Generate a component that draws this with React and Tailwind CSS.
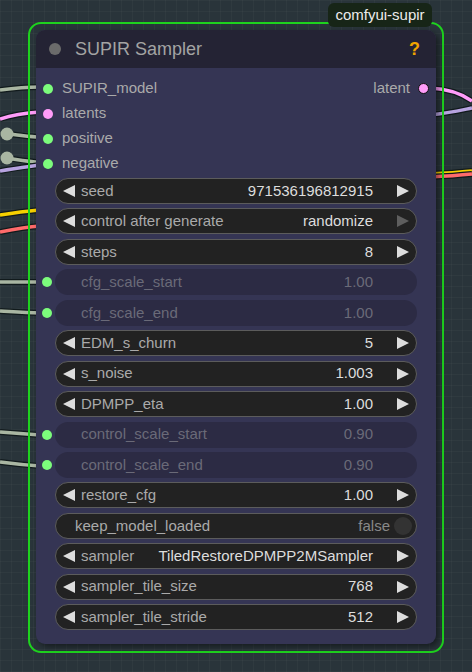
import React from "react";

const font = { fontFamily: '"Liberation Sans", Arial, sans-serif' };

function LeftArrow({ dim }) {
  return (
    <svg width="14" height="14" viewBox="0 0 14 14" className="shrink-0">
      <polygon points="13,1 13,13 1,7" fill={dim ? "#666" : "#dddddd"} />
    </svg>
  );
}
function RightArrow({ dim }) {
  return (
    <svg width="14" height="14" viewBox="0 0 14 14" className="shrink-0">
      <polygon points="1,1 1,13 13,7" fill={dim ? "#5e5e5e" : "#dddddd"} />
    </svg>
  );
}

function NumberWidget({ label, value, dimRight }) {
  return (
    <div className="relative h-[26px] ml-[19px] mr-[19px] rounded-full border border-[#5c5c5c] bg-[#222222] flex items-center pl-[6px] pr-[6px] text-[15px]">
      <LeftArrow />
      <span className="ml-[5px] text-[#aaaaaa]">{label}</span>
      <span className="ml-auto text-[#dddddd] mr-[23px]">{value}</span>
      <RightArrow dim={dimRight} />
    </div>
  );
}

function DisabledWidget({ label, value }) {
  return (
    <div className="relative h-[26px] ml-[19px] mr-[19px] rounded-full bg-[#2c2b44] flex items-center pl-[26px] pr-[44px] text-[15px]">
      <span className="absolute left-[-13px] top-[8px] w-[10px] h-[10px] rounded-full bg-[#7cfc7c]" />
      <span className="text-[#6a6a78]">{label}</span>
      <span className="ml-auto text-[#6a6a78]">{value}</span>
    </div>
  );
}

function InputRow({ label, color, right }) {
  return (
    <div className="h-[25px] flex items-center pl-[7px] pr-[7px] text-[15px]">
      <span className="w-[10px] h-[10px] rounded-full" style={{ background: color }} />
      <span className="ml-[9px] text-[#aaaaaa]">{label}</span>
      {right && (
        <>
          <span className="ml-auto text-[#aaaaaa]">latent</span>
          <span className="ml-[8px] w-[11px] h-[11px] rounded-full bg-[#ff9cf9] border border-[#111]" />
        </>
      )}
    </div>
  );
}

function Wire({ d, color }) {
  return (
    <>
      <path d={d} stroke="#111a1c" strokeWidth="6" fill="none" />
      <path d={d} stroke={color} strokeWidth="3.5" fill="none" />
    </>
  );
}

export default function App() {
  const sage = "#a9b6a2";
  return (
    <div
      className="relative w-[472px] h-[672px] overflow-hidden bg-[#29343a] bg-[linear-gradient(#ffffff07_1px,transparent_1px),linear-gradient(90deg,#ffffff07_1px,transparent_1px)] bg-[size:11px_11px]"
      style={font}
    >
      <svg className="absolute left-0 top-0" width="472" height="672">
        <Wire d="M0 90 C 15 88, 25 87, 40 87" color={sage} />
        <Wire d="M0 119 C 15 114, 25 113, 40 112" color="#ff9cf9" />
        <Wire d="M7 134 C 20 135, 30 137, 40 137" color={sage} />
        <Wire d="M7 158 C 20 160, 30 162, 40 162" color={sage} />
        <Wire d="M0 171 C 15 168, 25 167, 40 165" color="#b7a3e0" />
        <Wire d="M0 215 C 15 213, 25 211, 40 210" color="#f5d000" />
        <Wire d="M0 232 C 15 229, 25 227, 40 226" color="#ff6b6b" />
        <Wire d="M0 282 L 40 282" color={sage} />
        <Wire d="M0 311 C 15 312, 25 313, 40 313" color={sage} />
        <Wire d="M0 432 C 15 433, 25 434, 40 435" color={sage} />
        <Wire d="M0 462 C 15 464, 25 465, 40 466" color={sage} />
        <circle cx="7" cy="134" r="6.5" fill={sage} />
        <circle cx="7" cy="158" r="6.5" fill={sage} />
        <Wire d="M430 88 C 450 89, 462 94, 472 101" color="#ff9cf9" />
        <Wire d="M430 115 C 450 113, 462 110, 472 108" color="#b7a3e0" />
        <Wire d="M430 174 C 450 173, 462 172, 472 171" color="#f5d000" />
        <Wire d="M430 177 C 450 176, 462 175, 472 174" color="#ff6b6b" />
      </svg>

      {/* selection outline */}
      <div className="absolute left-[28px] top-[22px] w-[416px] h-[631px] rounded-[13px] border-2 border-[#1ed21e] p-[6px]">
        {/* node */}
        <div className="w-[400px] h-[614px] rounded-[9px] bg-[#353554] overflow-hidden shadow-[3px_3px_6px_rgba(0,0,0,0.45)] flex flex-col">
          <div className="h-[38px] shrink-0 bg-[#242334] flex items-center pl-[13px] pr-[16px]">
            <span className="w-[12px] h-[12px] rounded-full bg-[#6b6b6b]" />
            <span className="ml-[14px] text-[18px] text-[#a3a3a3]">SUPIR Sampler</span>
            <span className="ml-auto text-[18px] font-bold text-[#f0a400]">?</span>
          </div>
          <div className="pt-[8px] flex flex-col">
            <InputRow label="SUPIR_model" color="#7cfc7c" right />
            <InputRow label="latents" color="#ff9cf9" />
            <InputRow label="positive" color="#7cfc7c" />
            <InputRow label="negative" color="#7cfc7c" />
          </div>
          <div className="mt-[2px] flex flex-col gap-[4.45px]">
            <NumberWidget label="seed" value="971536196812915" />
            <NumberWidget label="control after generate" value="randomize" dimRight />
            <NumberWidget label="steps" value="8" />
            <DisabledWidget label="cfg_scale_start" value="1.00" />
            <DisabledWidget label="cfg_scale_end" value="1.00" />
            <NumberWidget label="EDM_s_churn" value="5" />
            <NumberWidget label="s_noise" value="1.003" />
            <NumberWidget label="DPMPP_eta" value="1.00" />
            <DisabledWidget label="control_scale_start" value="0.90" />
            <DisabledWidget label="control_scale_end" value="0.90" />
            <NumberWidget label="restore_cfg" value="1.00" />
            <div className="h-[26px] ml-[19px] mr-[19px] rounded-full border border-[#5c5c5c] bg-[#222222] flex items-center pl-[19px] pr-[4px] text-[15px]">
              <span className="text-[#aaaaaa]">keep_model_loaded</span>
              <span className="ml-auto text-[#888888]">false</span>
              <span className="ml-[4px] w-[18px] h-[18px] rounded-full bg-[#333333]" />
            </div>
            <div className="h-[26px] ml-[19px] mr-[19px] rounded-full border border-[#5c5c5c] bg-[#222222] flex items-center pl-[6px] pr-[6px] text-[15px]">
              <LeftArrow />
              <span className="ml-[5px] text-[#aaaaaa]">sampler</span>
              <span className="ml-auto text-[#dddddd] mr-[23px]">TiledRestoreDPMPP2MSampler</span>
              <RightArrow />
            </div>
            <NumberWidget label="sampler_tile_size" value="768" />
            <NumberWidget label="sampler_tile_stride" value="512" />
          </div>
        </div>
      </div>

      {/* badge */}
      <div className="absolute left-[328px] top-[3px] w-[104px] h-[24px] rounded-[6px] bg-[#172517] flex items-center justify-center text-[15px] text-[#ececec]">
        comfyui-supir
      </div>
    </div>
  );
}
